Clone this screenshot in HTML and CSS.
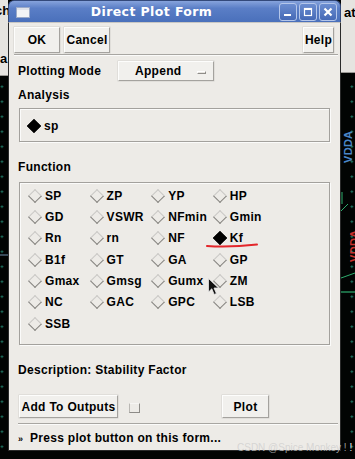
FILE: index.html
```html
<!DOCTYPE html>
<html>
<head>
<meta charset="utf-8">
<link rel="stylesheet" href="styles.css">
</head>
<body>
<div class="desktop">
  <div class="bgwin bg-left"><span class="bg-t1">ch</span><span class="bg-t2">a</span></div>
  <div class="bgwin bg-right"><span class="bg-t3">at</span></div>
  <svg class="schematic" width="355" height="459" viewBox="0 0 355 459">
    <line x1="0" y1="255" x2="8" y2="255" stroke="#5f7a93" stroke-width="1.2"/>
    <text x="0" y="0" transform="translate(352 163) rotate(-90)" font-family="Liberation Sans, sans-serif" font-size="11" fill="#4a86c8">VDDA</text>
    <text x="0" y="0" transform="translate(358 262) rotate(-90)" font-family="Liberation Sans, sans-serif" font-size="11" fill="#c8302c">VDDA</text>
    <line x1="342" y1="192" x2="342" y2="204" stroke="#2fae6e" stroke-width="1"/>
    <line x1="341" y1="211" x2="348" y2="204" stroke="#2fae6e" stroke-width="1"/>
    <line x1="341" y1="278" x2="355" y2="273" stroke="#2fae6e" stroke-width="1"/>
    <line x1="341" y1="292" x2="355" y2="292" stroke="#2fae6e" stroke-width="1.2"/>
  </svg>

  <div class="dialog">
    <div class="titlebar">
      <svg class="ticon" width="14" height="11" viewBox="0 0 14 11"><rect x="0.5" y="0.5" width="13" height="10" fill="#f3f4f6" stroke="#9aa9c8"/><rect x="1" y="1" width="12" height="2" fill="#dfe3ea"/></svg>
      <div class="title">Direct Plot Form</div>
      <div class="wbtns">
        <span class="wbtn"><svg width="12" height="12" viewBox="0 0 12 12"><rect x="2" y="8" width="7" height="2" fill="#fff"/></svg></span>
        <span class="wbtn"><svg width="12" height="12" viewBox="0 0 12 12"><rect x="2.5" y="2.5" width="7" height="7" fill="none" stroke="#fff" stroke-width="1.2"/><rect x="2" y="2" width="8" height="2" fill="#fff"/></svg></span>
        <span class="wbtn"><svg width="12" height="12" viewBox="0 0 12 12"><path d="M2.5 2.5 L9.5 9.5 M9.5 2.5 L2.5 9.5" stroke="#fff" stroke-width="2.2"/></svg></span>
      </div>
    </div>
    <div class="frame">
      <div class="toolbar">
        <div class="btn wide">OK</div>
        <div class="btn wide">Cancel</div>
        <div class="spacer"></div>
        <div class="btn help">Help</div>
      </div>
      <div class="etch etch-top"></div>
      <div class="content">
        <div class="moderow">
          <span class="lbl">Plotting Mode</span>
          <div class="btn option">Append<i class="cascade"></i></div>
        </div>
        <div class="section">Analysis</div>
        <div class="box analysis">
          <div class="opt on"><i class="dia"></i>sp</div>
        </div>
        <div class="section sec-func">Function</div>
        <div class="box funcs">
          <div class="opt"><i class="dia"></i>SP</div>
          <div class="opt"><i class="dia"></i>ZP</div>
          <div class="opt"><i class="dia"></i>YP</div>
          <div class="opt"><i class="dia"></i>HP</div>
          <div class="opt"><i class="dia"></i>GD</div>
          <div class="opt"><i class="dia"></i>VSWR</div>
          <div class="opt"><i class="dia"></i>NFmin</div>
          <div class="opt"><i class="dia"></i>Gmin</div>
          <div class="opt"><i class="dia"></i>Rn</div>
          <div class="opt"><i class="dia"></i>rn</div>
          <div class="opt"><i class="dia"></i>NF</div>
          <div class="opt on"><i class="dia"></i>Kf</div>
          <div class="opt"><i class="dia"></i>B1f</div>
          <div class="opt"><i class="dia"></i>GT</div>
          <div class="opt"><i class="dia"></i>GA</div>
          <div class="opt"><i class="dia"></i>GP</div>
          <div class="opt"><i class="dia"></i>Gmax</div>
          <div class="opt"><i class="dia"></i>Gmsg</div>
          <div class="opt"><i class="dia"></i>Gumx</div>
          <div class="opt"><i class="dia"></i>ZM</div>
          <div class="opt"><i class="dia"></i>NC</div>
          <div class="opt"><i class="dia"></i>GAC</div>
          <div class="opt"><i class="dia"></i>GPC</div>
          <div class="opt"><i class="dia"></i>LSB</div>
          <div class="opt"><i class="dia"></i>SSB</div>
        </div>
        <div class="desc">Description: Stability Factor</div>
        <div class="actions">
          <div class="btn add">Add To Outputs</div>
          <i class="toggle"></i>
          <div class="btn plot">Plot</div>
        </div>
      </div>
      <div class="etch etch-bottom"></div>
      <div class="status"><span class="chev">»</span>Press plot button on this form...</div>
    </div>
  </div>

  <svg class="redline" width="58" height="10" viewBox="0 0 58 10"><path d="M3 6 Q 26 7.5 53 4.5" fill="none" stroke="#e3262b" stroke-width="2" stroke-linecap="round"/></svg>
  <svg class="cursor" width="14" height="20" viewBox="0 0 14 20"><path d="M1.5 1.5 L1.5 15 L4.8 11.8 L7.2 17.5 L9.4 16.5 L7 11 L11.5 11 Z" fill="#111" stroke="#e8e8e8" stroke-width="0.8" stroke-linejoin="round"/></svg>
  <div class="watermark">CSDN @Spice Monkey ! <span class="wm-end">!</span></div>
</div>
</body>
</html>
```

FILE: styles.css
```css
* { box-sizing: border-box; margin: 0; padding: 0; }

html, body {
  width: 355px;
  height: 459px;
  overflow: hidden;
  background: #000;
}

body {
  font-family: "Liberation Sans", Arial, sans-serif;
  font-weight: bold;
  font-size: 12px;
  letter-spacing: 0.3px;
  color: #000;
}

.desktop {
  position: relative;
  width: 355px;
  height: 459px;
  background-color: #020403;
  background-image: radial-gradient(circle, #1f7d69 0.9px, transparent 1.3px);
  background-size: 14.583px 15px;
  background-position: -5.3px 4.2px;
}

/* background windows peeking out */
.bgwin {
  position: absolute;
  top: 0;
  background: #e6e4e0;
  overflow: hidden;
}
.bg-left {
  left: 0;
  width: 8px;
  height: 76px;
  border-bottom: 1px solid #9a9894;
}
.bg-right {
  left: 341px;
  width: 14px;
  height: 73px;
  border-bottom: 1px solid #9a9894;
}
.bg-t1, .bg-t2, .bg-t3 {
  position: absolute;
  font-size: 13px;
  letter-spacing: 0;
}
.bg-t1 { left: -5px; top: 3px; }
.bg-t2 { left: 0; top: 51px; }
.bg-t3 { left: 3px; top: 5px; }

.schematic {
  position: absolute;
  left: 0;
  top: 0;
}

/* dialog window */
.dialog {
  position: absolute;
  left: 8px;
  top: 0;
  width: 333px;
  height: 451px;
  display: flex;
  flex-direction: column;
}

.titlebar {
  height: 22px;
  flex: none;
  display: flex;
  align-items: center;
  padding: 0 3px 0 7px;
  border-radius: 6px 6px 0 0;
  background: linear-gradient(#86a3dc, #5a7ec6 35%, #4a70bb 100%);
  border: 1px solid #33497a;
  border-bottom: none;
  color: #fff;
}
.ticon { flex: none; margin-top: 1px; }
.title {
  flex: 1;
  text-align: center;
  font-family: "DejaVu Sans", sans-serif;
  font-size: 12.5px;
  letter-spacing: 0.4px;
  padding-right: 6px;
}
.wbtns { display: flex; gap: 2px; }
.wbtn {
  width: 18px;
  height: 18px;
  display: flex;
  align-items: center;
  justify-content: center;
  border: 1px solid #b4c6ea;
  border-radius: 3px;
  background: linear-gradient(#6b8dd0, #4569b6);
}

.frame {
  flex: 1;
  display: flex;
  flex-direction: column;
  background: #edebe7;
  border: 1px solid #2a2a2a;
  border-top: 1px solid #c9c7c3;
}

.toolbar {
  display: flex;
  padding: 4px 6px 0 5px;
  height: 30px;
  gap: 4px;
}
.spacer { flex: 1; }

.btn {
  display: flex;
  align-items: center;
  justify-content: center;
  background: #f1f0ed;
  border: 1px solid;
  border-color: #fdfdfc #a4a29e #a4a29e #fdfdfc;
  box-shadow: 0 0 0 0.5px #d3d1cd;
  white-space: nowrap;
}
.wide { width: 46px; height: 26px; }
.help { width: 31px; height: 26px; }

.etch {
  height: 2px;
  border-top: 1px solid #a8a6a2;
  border-bottom: 1px solid #fbfbfa;
  flex: none;
}
.etch-top { margin: 1px 2px 0 5px; }
.etch-bottom { margin: 5px 2px 0 9px; }

.content {
  padding: 0 10px 0 9px;
  display: flex;
  flex-direction: column;
}

.moderow {
  display: flex;
  align-items: center;
  margin-top: 5px;
  height: 20px;
}
.lbl { width: 100px; }
.option {
  width: 96px;
  height: 20px;
  justify-content: flex-start;
  padding-left: 16px;
}
.cascade {
  margin-left: auto;
  margin-right: 7px;
  margin-top: 3px;
  width: 9px;
  height: 3px;
  border: 1px solid;
  border-color: #fff #8f8d89 #8f8d89 #fff;
  background: #e6e4e0;
}

.section {
  line-height: 16px;
  margin-top: 6px;
}
.sec-func { margin-top: 17px; }

.box {
  margin-left: 1px;
  border: 1px solid #a3a19d;
  box-shadow: inset 1px 1px 0 #fbfbfa, 1px 1px 0 #fbfbfa;
}
.analysis {
  margin-top: 5px;
  height: 34px;
  display: flex;
  align-items: center;
  padding-left: 7px;
  padding-top: 2px;
}

.funcs {
  margin-top: 7px;
  height: 163px;
  display: grid;
  grid-template-columns: repeat(4, 61.6px);
  grid-auto-rows: 21.33px;
  padding: 2px 0 0 8px;
  align-content: start;
}

.opt {
  display: flex;
  align-items: center;
  gap: 3px;
}
.dia {
  width: 14px;
  height: 14px;
  flex: none;
  display: flex;
  align-items: center;
  justify-content: center;
}
.dia::before {
  content: "";
  width: 8px;
  height: 8px;
  transform: rotate(45deg);
  border: 1px solid;
  border-color: #c9c8c5 #85837f #85837f #c9c8c5;
}
.on .dia::before {
  background: #000;
  border-color: #000;
}

.desc {
  margin-top: 17px;
  line-height: 16px;
}

.actions {
  margin-top: 17px;
  height: 23px;
  display: flex;
  align-items: center;
}
.add {
  margin-left: 1px;
  width: 99px;
  height: 23px;
}
.toggle {
  margin-left: 11px;
  margin-top: 2px;
  width: 11px;
  height: 10px;
  border: 1px solid;
  border-color: #f6f5f3 #8d8b87 #8d8b87 #b9b7b3;
}
.plot {
  margin-left: 82px;
  width: 47px;
  height: 23px;
}

.status {
  margin-top: 4px;
  line-height: 16px;
  padding-left: 9px;
  display: flex;
  align-items: center;
}
.chev {
  font-size: 9px;
  width: 12px;
  padding-top: 2px;
}

.redline {
  position: absolute;
  left: 204px;
  top: 240px;
}
.cursor {
  position: absolute;
  left: 207px;
  top: 277px;
}
.watermark {
  position: absolute;
  left: 237px;
  top: 442px;
  font-family: "Liberation Sans", Arial, sans-serif;
  font-weight: normal;
  font-size: 10px;
  letter-spacing: 0;
  color: rgba(205, 205, 205, 0.75);
  white-space: nowrap;
}
.wm-end { color: #e8e8e8; }
```
